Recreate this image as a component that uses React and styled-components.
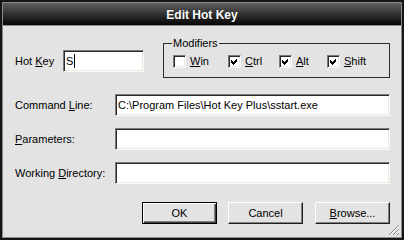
import React from "react";
import styled, { createGlobalStyle } from "styled-components";

const Global = createGlobalStyle`
  html, body { margin: 0; padding: 0; background: #1a1a1a; }
  body { font-family: "Liberation Sans", Arial, sans-serif; font-size: 11px; color: #000; }
  * { box-sizing: border-box; }
`;

const Window = styled.div`
  width: 404px;
  height: 240px;
  border: 2px solid #161616;
  padding: 1px;
  box-shadow: inset 0 0 0 1px #8a8a8a;
  display: flex;
  flex-direction: column;
  background: #e3e3e3;
`;

const TitleBar = styled.div`
  height: 23px;
  flex: none;
  border-bottom: 1px solid #8e8e8e;
  background: linear-gradient(#5e5e5e, #060606);
  display: flex;
  align-items: center;
  justify-content: center;
  color: #fff;
  font-family: "Liberation Sans", Arial, sans-serif;
  font-weight: bold;
  font-size: 12px;
  padding-top: 1px;
  text-shadow: 0 0 1px rgba(0,0,0,0.6);
`;

const Body = styled.div`
  position: relative;
  flex: 1;
  background: #e3e3e3;
  padding: 10px 11px 0 12px;
  display: flex;
  flex-direction: column;
`;

const TopRow = styled.div`
  display: flex;
  align-items: flex-start;
`;

const HotKeyGroup = styled.div`
  display: flex;
  align-items: center;
  margin-top: 14px;
`;

const Label = styled.span`
  width: ${(p) => p.$w}px;
  flex: none;
  white-space: nowrap;
  line-height: 13px;
`;

const U = styled.span`
  text-decoration: underline;
  text-underline-offset: 1px;
`;

const TextBox = styled.div`
  width: ${(p) => (p.$w ? `${p.$w}px` : "auto")};
  flex: ${(p) => (p.$w ? "none" : "1")};
  height: 22px;
  background: #fff;
  border-top: 1px solid #7a7a7a;
  border-left: 1px solid #7a7a7a;
  border-bottom: 1px solid #fbfbf7;
  border-right: 1px solid #fbfbf7;
  box-shadow: inset 1px 1px 0 #2a2a2a, inset -1px -1px 0 #ecebe2;
  padding: 0 2px 0 2px;
  display: flex;
  align-items: center;
  white-space: nowrap;
  overflow: hidden;
`;

const Caret = styled.span`
  display: inline-block;
  width: 1px;
  height: 14px;
  background: #000;
  margin-left: 1px;
`;

const Group = styled.fieldset`
  margin: 0 0 0 auto;
  width: 227px;
  border: 1px solid #2a2a2a;
  padding: 5px 8px 9px 8px;
`;

const Legend = styled.legend`
  padding: 0 1px;
  line-height: 14px;
  font-size: 11px;
`;

const CheckRow = styled.div`
  display: flex;
  align-items: center;
  height: 13px;
  margin-left: 1px;
`;

const CheckItem = styled.div`
  display: flex;
  align-items: center;
  width: ${(p) => (p.$w ? `${p.$w}px` : "auto")};
  flex: none;
`;

const Box = styled.span`
  width: 13px;
  height: 13px;
  flex: none;
  background: #fff;
  border-top: 1px solid #7a7a7a;
  border-left: 1px solid #7a7a7a;
  border-bottom: 1px solid #fbfbf7;
  border-right: 1px solid #fbfbf7;
  box-shadow: inset 1px 1px 0 #2a2a2a, inset -1px -1px 0 #ecebe2;
  margin-right: 4px;
  display: flex;
  svg { display: block; }
`;

const CheckText = styled.span`
  line-height: 13px;
`;

const Fields = styled.div`
  display: flex;
  flex-direction: column;
  gap: 12px;
  margin-top: 16px;
`;

const FieldRow = styled.div`
  display: flex;
  align-items: center;
`;

const ButtonRow = styled.div`
  display: flex;
  justify-content: flex-end;
  margin-top: 18px;
`;

const Button = styled.div`
  width: 75px;
  height: 22px;
  margin-left: ${(p) => p.$gap || 0}px;
  display: flex;
  align-items: center;
  justify-content: center;
  background: #e3e3e3;
  line-height: 13px;
  ${(p) =>
    p.$default
      ? `border: 1px solid #000;
         box-shadow: inset 1px 1px 0 #fff, inset -1px -1px 0 #404040, inset -2px -2px 0 #808080;`
      : `border-top: 1px solid #fff;
         border-left: 1px solid #fff;
         border-right: 1px solid #202020;
         border-bottom: 1px solid #202020;
         box-shadow: inset -1px -1px 0 #808080;`}
`;

const Grip = styled.svg`
  position: absolute;
  right: 1px;
  bottom: 1px;
`;

function Check({ checked, children, w }) {
  return (
    <CheckItem $w={w}>
      <Box>
        {checked && (
          <svg width="11" height="11" viewBox="0 0 11 11" shapeRendering="crispEdges">
            <polygon points="2,4 4,6 8,2 8,5 4,9 2,7" fill="#000" />
          </svg>
        )}
      </Box>
      <CheckText>{children}</CheckText>
    </CheckItem>
  );
}

export default function App() {
  return (
    <>
      <Global />
      <Window>
        <TitleBar>Edit Hot Key</TitleBar>
        <Body>
          <TopRow>
            <HotKeyGroup>
              <Label $w={48}>
                Hot <U>K</U>ey
              </Label>
              <TextBox $w={81}>
                S<Caret />
              </TextBox>
            </HotKeyGroup>
            <Group>
              <Legend>Modifiers</Legend>
              <CheckRow>
                <Check w={55}>
                  <U>W</U>in
                </Check>
                <Check w={51} checked>
                  <U>C</U>trl
                </Check>
                <Check w={48} checked>
                  <U>A</U>lt
                </Check>
                <Check checked>
                  <U>S</U>hift
                </Check>
              </CheckRow>
            </Group>
          </TopRow>
          <Fields>
            <FieldRow>
              <Label $w={100}>
                Command <U>L</U>ine:
              </Label>
              <TextBox>C:\Program Files\Hot Key Plus\sstart.exe</TextBox>
            </FieldRow>
            <FieldRow>
              <Label $w={100}>
                <U>P</U>arameters:
              </Label>
              <TextBox />
            </FieldRow>
            <FieldRow>
              <Label $w={100}>
                Working <U>D</U>irectory:
              </Label>
              <TextBox />
            </FieldRow>
          </Fields>
          <ButtonRow>
            <Button $default>OK</Button>
            <Button $gap={11}>Cancel</Button>
            <Button $gap={12}>
              <U>B</U>rowse...
            </Button>
          </ButtonRow>
          <Grip width="12" height="12" viewBox="0 0 12 12" shapeRendering="crispEdges">
            <path d="M11 1 L1 11" stroke="#808080" strokeWidth="1.2" />
            <path d="M11 5 L5 11" stroke="#808080" strokeWidth="1.2" />
            <path d="M11 9 L9 11" stroke="#808080" strokeWidth="1.2" />
            <path d="M11 2 L2 11" stroke="#ffffff" strokeWidth="1" />
            <path d="M11 6 L6 11" stroke="#ffffff" strokeWidth="1" />
          </Grip>
        </Body>
      </Window>
    </>
  );
}
